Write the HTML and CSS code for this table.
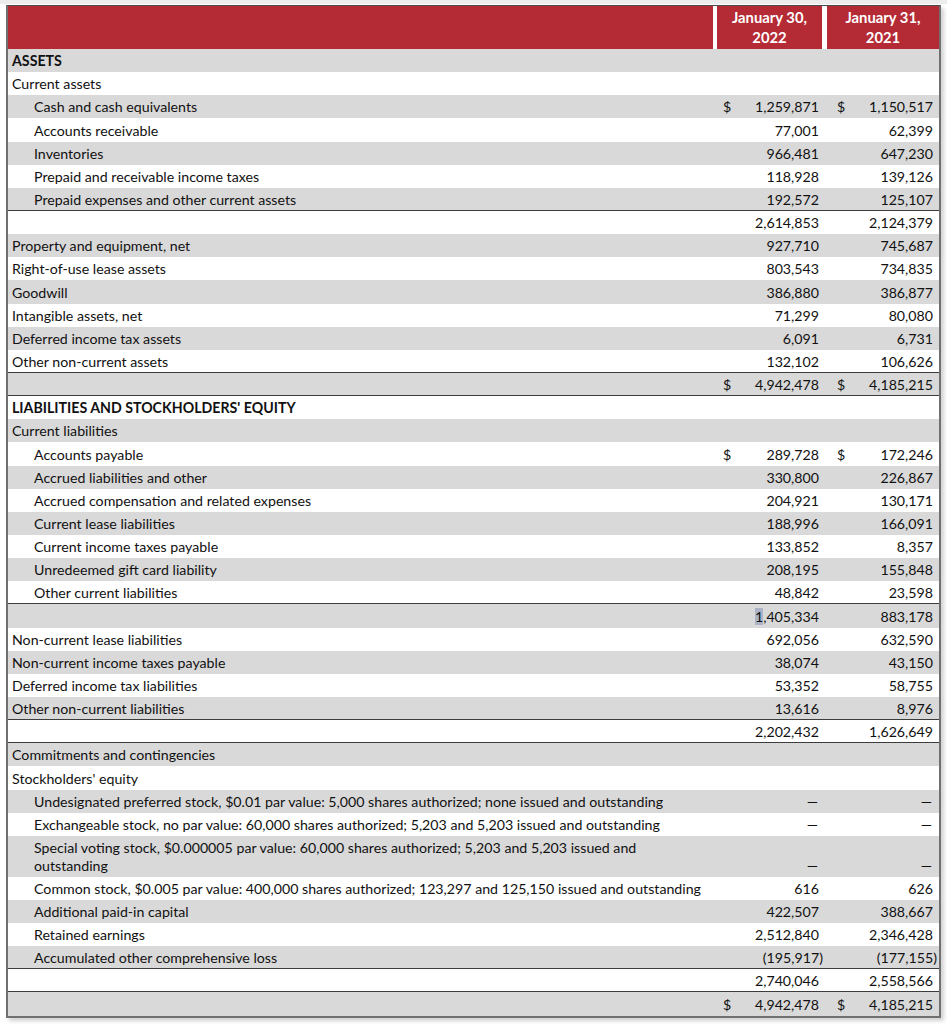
FILE: index.html
```html
<!DOCTYPE html>
<html lang="en">
<head>
<meta charset="utf-8">
<title>Consolidated Balance Sheets</title>
<link rel="stylesheet" href="styles.css">
</head>
<body>
<div class="sheet">
  <div class="hdr">
    <div class="h-lbl"></div>
    <div class="h-col c1">January 30,<br>2022</div>
    <div class="h-col c2">January 31,<br>2021</div>
  </div>

  <div class="row"><div class="lbl l1 b">ASSETS</div><div class="n c1"></div><div class="n c2"></div></div>
  <div class="row"><div class="lbl l1">Current assets</div><div class="n c1"></div><div class="n c2"></div></div>
  <div class="row"><div class="lbl l2">Cash and cash equivalents</div><div class="n c1"><span>$</span><span>1,259,871</span></div><div class="n c2"><span>$</span><span>1,150,517</span></div></div>
  <div class="row"><div class="lbl l2">Accounts receivable</div><div class="n c1"><span></span><span>77,001</span></div><div class="n c2"><span></span><span>62,399</span></div></div>
  <div class="row"><div class="lbl l2">Inventories</div><div class="n c1"><span></span><span>966,481</span></div><div class="n c2"><span></span><span>647,230</span></div></div>
  <div class="row"><div class="lbl l2">Prepaid and receivable income taxes</div><div class="n c1"><span></span><span>118,928</span></div><div class="n c2"><span></span><span>139,126</span></div></div>
  <div class="row ul"><div class="lbl l2">Prepaid expenses and other current assets</div><div class="n c1"><span></span><span>192,572</span></div><div class="n c2"><span></span><span>125,107</span></div></div>
  <div class="row"><div class="lbl l1"></div><div class="n c1"><span></span><span>2,614,853</span></div><div class="n c2"><span></span><span>2,124,379</span></div></div>
  <div class="row"><div class="lbl l1">Property and equipment, net</div><div class="n c1"><span></span><span>927,710</span></div><div class="n c2"><span></span><span>745,687</span></div></div>
  <div class="row"><div class="lbl l1">Right-of-use lease assets</div><div class="n c1"><span></span><span>803,543</span></div><div class="n c2"><span></span><span>734,835</span></div></div>
  <div class="row"><div class="lbl l1">Goodwill</div><div class="n c1"><span></span><span>386,880</span></div><div class="n c2"><span></span><span>386,877</span></div></div>
  <div class="row"><div class="lbl l1">Intangible assets, net</div><div class="n c1"><span></span><span>71,299</span></div><div class="n c2"><span></span><span>80,080</span></div></div>
  <div class="row"><div class="lbl l1">Deferred income tax assets</div><div class="n c1"><span></span><span>6,091</span></div><div class="n c2"><span></span><span>6,731</span></div></div>
  <div class="row ul"><div class="lbl l1">Other non-current assets</div><div class="n c1"><span></span><span>132,102</span></div><div class="n c2"><span></span><span>106,626</span></div></div>
  <div class="row ul"><div class="lbl l1"></div><div class="n c1"><span>$</span><span>4,942,478</span></div><div class="n c2"><span>$</span><span>4,185,215</span></div></div>

  <div class="row"><div class="lbl l1 b">LIABILITIES AND STOCKHOLDERS' EQUITY</div><div class="n c1"></div><div class="n c2"></div></div>
  <div class="row"><div class="lbl l1">Current liabilities</div><div class="n c1"></div><div class="n c2"></div></div>
  <div class="row"><div class="lbl l2">Accounts payable</div><div class="n c1"><span>$</span><span>289,728</span></div><div class="n c2"><span>$</span><span>172,246</span></div></div>
  <div class="row"><div class="lbl l2">Accrued liabilities and other</div><div class="n c1"><span></span><span>330,800</span></div><div class="n c2"><span></span><span>226,867</span></div></div>
  <div class="row"><div class="lbl l2">Accrued compensation and related expenses</div><div class="n c1"><span></span><span>204,921</span></div><div class="n c2"><span></span><span>130,171</span></div></div>
  <div class="row"><div class="lbl l2">Current lease liabilities</div><div class="n c1"><span></span><span>188,996</span></div><div class="n c2"><span></span><span>166,091</span></div></div>
  <div class="row"><div class="lbl l2">Current income taxes payable</div><div class="n c1"><span></span><span>133,852</span></div><div class="n c2"><span></span><span>8,357</span></div></div>
  <div class="row"><div class="lbl l2">Unredeemed gift card liability</div><div class="n c1"><span></span><span>208,195</span></div><div class="n c2"><span></span><span>155,848</span></div></div>
  <div class="row ul"><div class="lbl l2">Other current liabilities</div><div class="n c1"><span></span><span>48,842</span></div><div class="n c2"><span></span><span>23,598</span></div></div>
  <div class="row"><div class="lbl l1"></div><div class="n c1"><span></span><span><span class="sel">1</span>,405,334</span></div><div class="n c2"><span></span><span>883,178</span></div></div>
  <div class="row"><div class="lbl l1">Non-current lease liabilities</div><div class="n c1"><span></span><span>692,056</span></div><div class="n c2"><span></span><span>632,590</span></div></div>
  <div class="row"><div class="lbl l1">Non-current income taxes payable</div><div class="n c1"><span></span><span>38,074</span></div><div class="n c2"><span></span><span>43,150</span></div></div>
  <div class="row"><div class="lbl l1">Deferred income tax liabilities</div><div class="n c1"><span></span><span>53,352</span></div><div class="n c2"><span></span><span>58,755</span></div></div>
  <div class="row ul"><div class="lbl l1">Other non-current liabilities</div><div class="n c1"><span></span><span>13,616</span></div><div class="n c2"><span></span><span>8,976</span></div></div>
  <div class="row ul"><div class="lbl l1"></div><div class="n c1"><span></span><span>2,202,432</span></div><div class="n c2"><span></span><span>1,626,649</span></div></div>

  <div class="row"><div class="lbl l1">Commitments and contingencies</div><div class="n c1"></div><div class="n c2"></div></div>
  <div class="row"><div class="lbl l1">Stockholders' equity</div><div class="n c1"></div><div class="n c2"></div></div>
  <div class="row"><div class="lbl l2">Undesignated preferred stock, $0.01 par value: 5,000 shares authorized; none issued and outstanding</div><div class="n c1 dash"><span></span><span>—</span></div><div class="n c2 dash"><span></span><span>—</span></div></div>
  <div class="row"><div class="lbl l2">Exchangeable stock, no par value: 60,000 shares authorized; 5,203 and 5,203 issued and outstanding</div><div class="n c1 dash"><span></span><span>—</span></div><div class="n c2 dash"><span></span><span>—</span></div></div>
  <div class="row tall"><div class="lbl l2">Special voting stock, $0.000005 par value: 60,000 shares authorized; 5,203 and 5,203 issued and<br>outstanding</div><div class="n c1 dash"><span></span><span>—</span></div><div class="n c2 dash"><span></span><span>—</span></div></div>
  <div class="row"><div class="lbl l2">Common stock, $0.005 par value: 400,000 shares authorized; 123,297 and 125,150 issued and outstanding</div><div class="n c1"><span></span><span>616</span></div><div class="n c2"><span></span><span>626</span></div></div>
  <div class="row"><div class="lbl l2">Additional paid-in capital</div><div class="n c1"><span></span><span>422,507</span></div><div class="n c2"><span></span><span>388,667</span></div></div>
  <div class="row"><div class="lbl l2">Retained earnings</div><div class="n c1"><span></span><span>2,512,840</span></div><div class="n c2"><span></span><span>2,346,428</span></div></div>
  <div class="row ul"><div class="lbl l2">Accumulated other comprehensive loss</div><div class="n c1"><span></span><span>(195,917<span class="rp">)</span></span></div><div class="n c2"><span></span><span>(177,155<span class="rp">)</span></span></div></div>
  <div class="row ul"><div class="lbl l1"></div><div class="n c1"><span></span><span>2,740,046</span></div><div class="n c2"><span></span><span>2,558,566</span></div></div>
  <div class="row"><div class="lbl l1"></div><div class="n c1"><span>$</span><span>4,942,478</span></div><div class="n c2"><span>$</span><span>4,185,215</span></div></div>
</div>
</body>
</html>
```

FILE: styles.css
```css
html, body {
  margin: 0;
  padding: 0;
}

body {
  background: linear-gradient(#ececec 0 4px, #ffffff 4px);
  padding-top: 5px;
  font-family: Lato, "Open Sans", sans-serif;
  font-size: 14.2px;
  color: #111;
  min-height: 1019px;
}

.sheet {
  margin-left: 6px;
  width: 935px;
  box-sizing: border-box;
  border: 2px solid #707070;
  border-top: 1px solid #4a4a4a;
  background: #fff;
  box-shadow: 3px 3px 4px rgba(0, 0, 0, 0.18);
}

.hdr {
  display: grid;
  grid-template-columns: 705px 109px 117px;
  height: 43px;
  background: #b52b35;
}

.h-col {
  color: #fff;
  font-weight: 700;
  font-size: 14.8px;
  text-align: center;
  line-height: 20px;
  padding-top: 1px;
}

.h-col.c1 {
  border-left: 4px solid #fff;
}

.h-col.c2 {
  border-left: 5px solid #fff;
}

.row {
  display: grid;
  grid-template-columns: 705px 109px 117px;
  height: 23.15px;
  box-sizing: border-box;
  align-items: end;
  line-height: 18px;
  padding-bottom: 2px;
}

.row:nth-child(even) {
  background: #d9d9d9;
}

.row.tall {
  height: 41px;
}

.row.ul {
  border-bottom: 1px solid #3c3c3c;
  padding-bottom: 1px;
}

.lbl {
  white-space: nowrap;
}

.lbl.l1 {
  padding-left: 4px;
}

.lbl.l2 {
  padding-left: 26px;
}

.b {
  font-weight: 700;
}

.n {
  display: flex;
  justify-content: space-between;
  white-space: nowrap;
}

.n.c1 {
  padding-left: 10px;
  padding-right: 3px;
}

.n.c2 {
  padding-left: 15px;
  padding-right: 6px;
}

.n.dash span:last-child {
  padding-right: 1px;
}

.rp {
  margin-right: -4px;
}

.sel {
  background: #aab4c6;
}
```
